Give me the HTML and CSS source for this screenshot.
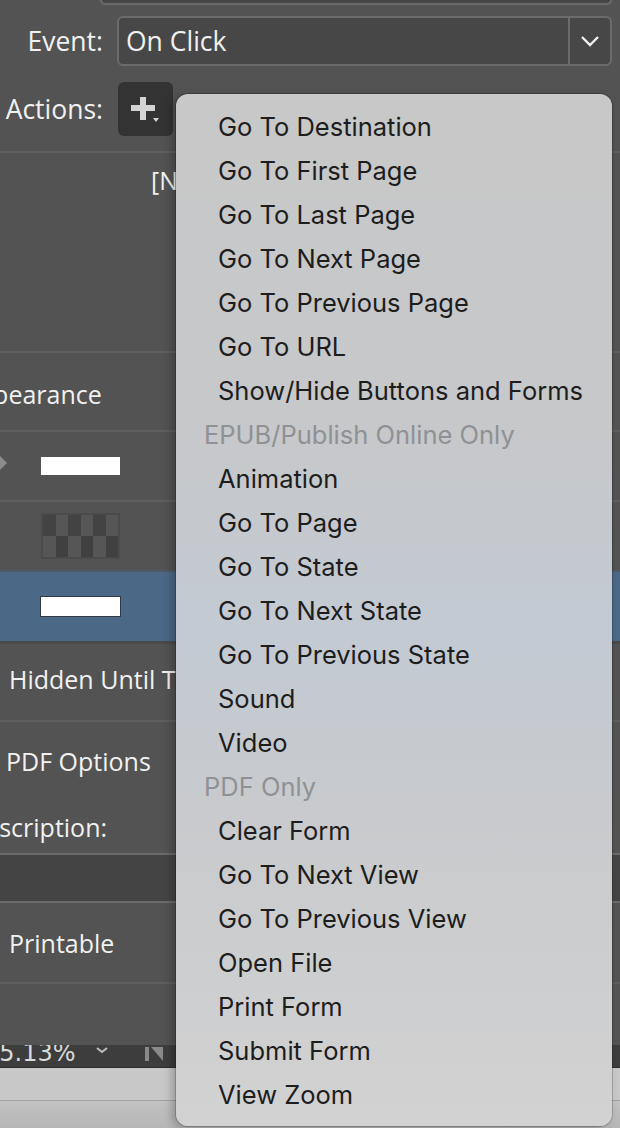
FILE: index.html
```html
<!DOCTYPE html>
<html>
<head>
<meta charset="utf-8">
<link rel="stylesheet" href="styles.css">
</head>
<body>
<div class="screen">
  <div class="panel">
    <div class="prev-field"></div>
    <div class="field-row event-row">
      <div class="label">Event:</div>
      <div class="dropdown">
        <div class="dd-text">On Click</div>
        <div class="dd-arrow">
          <svg width="20" height="12" viewBox="0 0 20 12"><path d="M2 2 L10 10 L18 2" fill="none" stroke="#f2f2f2" stroke-width="2.4"/></svg>
        </div>
      </div>
    </div>
    <div class="field-row actions-row">
      <div class="label">Actions:</div>
      <div class="add-btn">
        <svg width="55" height="54" viewBox="0 0 55 54">
          <rect x="13" y="23" width="24" height="6" fill="#d4d4d4"/>
          <rect x="22" y="15" width="6" height="23" fill="#d4d4d4"/>
          <polygon points="35,36 41,36 38,40" fill="#d4d4d4"/>
        </svg>
      </div>
    </div>
    <div class="section actions-list">
      <div class="none-text">[No Actions Added]</div>
    </div>
    <div class="section appearance-head">
      <div class="cut-label appearance-label">Appearance</div>
    </div>
    <div class="section state-row">
      <svg class="marker" width="8" height="14" viewBox="0 0 8 14"><polygon points="0,0 7,7 0,14" fill="#8c8c8c"/></svg>
      <div class="swatch white"></div>
    </div>
    <div class="section state-row tall">
      <div class="checker">
        <span></span><span></span><span></span><span></span><span></span><span></span>
        <span></span><span></span><span></span><span></span><span></span><span></span>
      </div>
    </div>
    <div class="section state-row selected">
      <div class="swatch white bordered"></div>
    </div>
    <div class="section option-row hidden-row">
      <div class="opt-label hidden-label">Hidden Until Triggered</div>
    </div>
    <div class="section pdf-block">
      <div class="opt-label pdf-label">PDF Options</div>
      <div class="cut-label desc-label">Description:</div>
      <div class="desc-input"></div>
      <div class="opt-label print-label">Printable</div>
    </div>
    <div class="section filler"></div>
  </div>
  <div class="statusbar">
    <div class="zoom-text">55.13%</div>
    <svg class="zoom-chev" width="12" height="6" viewBox="0 0 12 6"><path d="M1 1 L6 5 L11 1" fill="none" stroke="#bdbdbd" stroke-width="2"/></svg>
    <svg class="first-page" width="20" height="14" viewBox="0 0 20 14"><rect x="0" y="0" width="4" height="14" fill="#8a8a8a"/><polygon points="6,0 18,0 18,14" fill="#8a8a8a"/></svg>
  </div>
  <div class="tabs">
    <div class="tab first"></div>
    <div class="tab"></div>
  </div>
  <div class="bottom-strip"></div>

  <div class="menu">
    <div class="item">Go To Destination</div>
    <div class="item">Go To First Page</div>
    <div class="item">Go To Last Page</div>
    <div class="item">Go To Next Page</div>
    <div class="item">Go To Previous Page</div>
    <div class="item">Go To URL</div>
    <div class="item">Show/Hide Buttons and Forms</div>
    <div class="heading">EPUB/Publish Online Only</div>
    <div class="item">Animation</div>
    <div class="item">Go To Page</div>
    <div class="item">Go To State</div>
    <div class="item">Go To Next State</div>
    <div class="item">Go To Previous State</div>
    <div class="item">Sound</div>
    <div class="item">Video</div>
    <div class="heading">PDF Only</div>
    <div class="item">Clear Form</div>
    <div class="item">Go To Next View</div>
    <div class="item">Go To Previous View</div>
    <div class="item">Open File</div>
    <div class="item">Print Form</div>
    <div class="item">Submit Form</div>
    <div class="item">View Zoom</div>
  </div>
</div>
</body>
</html>
```

FILE: styles.css
```css
html, body {
  margin: 0;
  padding: 0;
  background: #535353;
}

.screen {
  position: relative;
  width: 620px;
  height: 1128px;
  overflow: hidden;
  font-family: "Open Sans", "DejaVu Sans", sans-serif;
  color: #f1f1f1;
}

.panel {
  height: 1045px;
  background: #535353;
  display: flex;
  flex-direction: column;
}

.prev-field {
  height: 3px;
  margin: 0 8px 0 100px;
  border: 2px solid #6a6a6a;
  border-top: none;
  border-radius: 0 0 6px 6px;
  background: #474747;
}

.field-row {
  display: flex;
  align-items: center;
}

.event-row {
  height: 50px;
  margin-top: 11px;
}

.actions-row {
  height: 54px;
  margin-top: 16px;
}

.label {
  width: 103px;
  text-align: right;
  font-size: 26.5px;
  line-height: 30px;
  flex: none;
}

.dropdown {
  margin-left: 14px;
  margin-right: 8px;
  flex: 1;
  height: 50px;
  box-sizing: border-box;
  border: 2px solid #6b6b6b;
  border-radius: 6px;
  background: #474747;
  display: flex;
  align-items: stretch;
}

.dd-text {
  flex: 1;
  padding-left: 7px;
  font-size: 26.5px;
  line-height: 46px;
}

.dd-arrow {
  width: 40px;
  border-left: 2px solid #6b6b6b;
  display: flex;
  align-items: center;
  justify-content: center;
}

.add-btn {
  margin-left: 15px;
  width: 55px;
  height: 54px;
  background: #333333;
  border-radius: 6px;
}

.add-btn svg {
  display: block;
}

.section {
  border-top: 2px solid #5e5e5e;
  box-sizing: border-box;
}

.actions-list {
  margin-top: 15px;
  height: 200px;
}

.none-text {
  padding-left: 151px;
  padding-top: 12px;
  font-size: 25px;
  line-height: 30px;
  white-space: nowrap;
  overflow: hidden;
  width: 25px;
}

.appearance-head {
  height: 79px;
  display: flex;
  align-items: center;
  overflow: hidden;
}

.cut-label {
  font-size: 25px;
  line-height: 30px;
  white-space: nowrap;
}

.appearance-label {
  margin-left: -38px;
  margin-top: 5px;
}

.state-row {
  height: 70px;
  display: flex;
  align-items: center;
  padding-left: 41px;
  position: relative;
}

.state-row.selected {
  height: 74px;
  background: #4c6887;
  border-top: 2px solid #4f5a66;
  border-bottom: 3px solid #4a4a4a;
  padding-left: 40px;
}

.marker {
  position: absolute;
  left: 0;
  top: 24px;
}

.swatch {
  width: 79px;
  height: 18px;
  background: #ffffff;
}

.swatch.bordered {
  width: 79px;
  height: 19px;
  border: 1px solid #2f3a46;
}

.checker {
  width: 79px;
  height: 46px;
  box-sizing: border-box;
  border: 2px solid #4b4b4b;
  display: grid;
  grid-template-columns: repeat(6, 1fr);
  grid-template-rows: repeat(2, 1fr);
  background: #4b4b4b;
}

.checker span:nth-child(odd) { background: #434343; }
.checker span:nth-child(even) { background: #565656; }
.checker span:nth-child(n+7):nth-child(odd) { background: #565656; }
.checker span:nth-child(n+7):nth-child(even) { background: #404040; }

.hidden-row {
  height: 76px;
  border-top: none;
  display: flex;
  align-items: center;
}

.opt-label {
  font-size: 25px;
  line-height: 30px;
  white-space: nowrap;
}

.hidden-label {
  padding-left: 9px;
  margin-top: -6px;
  width: 167px;
  overflow: hidden;
}

.pdf-block {
  height: 262px;
  display: flex;
  flex-direction: column;
  overflow: hidden;
}

.pdf-label {
  padding-left: 6px;
  margin-top: 24px;
}

.desc-label {
  margin-left: -33px;
  margin-top: 36px;
}

.desc-input {
  margin-top: 11px;
  height: 50px;
  box-sizing: border-box;
  background: #444444;
  border-top: 2px solid #6b6b6b;
  border-bottom: 2px solid #6b6b6b;
}

.print-label {
  padding-left: 9px;
  margin-top: 25px;
}

.filler {
  flex: 1;
}

.statusbar {
  height: 22px;
  background: #3d3d3d;
  border-bottom: 1px solid #2e2e2e;
  display: flex;
  align-items: flex-start;
  overflow: hidden;
}

.zoom-text {
  margin-left: -16px;
  margin-top: -6px;
  font-size: 24px;
  line-height: 28px;
  color: #dadada;
  font-family: "DejaVu Sans", sans-serif;
}

.zoom-chev {
  margin-left: 20px;
  margin-top: 2px;
}

.first-page {
  margin-left: 37px;
  margin-top: 2px;
}

.tabs {
  height: 32px;
  display: flex;
  background: #c8c8c8;
  border-bottom: 1px solid #a2a2a2;
}

.tab.first {
  width: 144px;
  border-right: 1px solid #a8a8a8;
}

.tab {
  flex: 1;
}

.bottom-strip {
  height: 27px;
  background: linear-gradient(#c2c2c2, #b6b6b6);
}

.menu {
  position: absolute;
  left: 176px;
  top: 94px;
  width: 436px;
  height: 1032px;
  box-sizing: border-box;
  padding-top: 11px;
  border-radius: 12px;
  background: linear-gradient(180deg, #c8c8c8 0%, #c6c8cb 35%, #c3cad3 52%, #c8cacd 70%, #d2d2d2 100%);
  box-shadow: 0 0 0 1px rgba(0, 0, 0, 0.18), -4px 2px 10px rgba(0, 0, 0, 0.25);
  font-family: "Inter", "Roboto", sans-serif;
  font-size: 25.5px;
  color: #1d1d1d;
}

.item,
.heading {
  height: 44px;
  line-height: 44px;
  white-space: nowrap;
}

.item {
  padding-left: 42px;
}

.heading {
  padding-left: 28px;
  color: #8f9194;
}
```
